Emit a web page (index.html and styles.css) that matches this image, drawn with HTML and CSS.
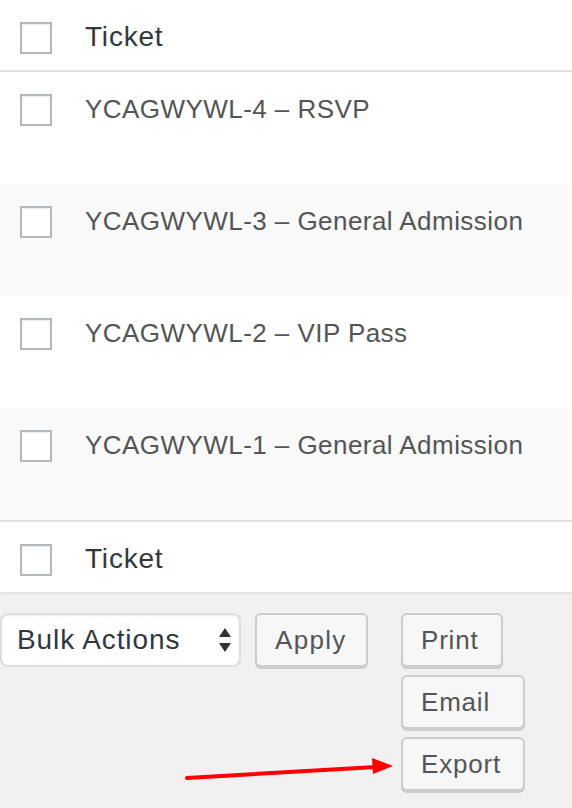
FILE: index.html
```html
<!DOCTYPE html>
<html>
<head>
<meta charset="utf-8">
<link rel="stylesheet" href="styles.css">
</head>
<body>
<div class="page">
  <div class="table">
    <div class="row head">
      <span class="cb"></span>
      <span class="label dark">Ticket</span>
    </div>
    <div class="row item">
      <span class="cb"></span>
      <span class="label">YCAGWYWL-4 – RSVP</span>
    </div>
    <div class="row item alt">
      <span class="cb"></span>
      <span class="label">YCAGWYWL-3 – General Admission</span>
    </div>
    <div class="row item">
      <span class="cb"></span>
      <span class="label">YCAGWYWL-2 – VIP Pass</span>
    </div>
    <div class="row item alt">
      <span class="cb"></span>
      <span class="label">YCAGWYWL-1 – General Admission</span>
    </div>
    <div class="row foot">
      <span class="cb"></span>
      <span class="label dark">Ticket</span>
    </div>
  </div>
  <div class="tablenav">
    <div class="select">
      <span>Bulk Actions</span>
      <svg class="updown" width="12" height="24" viewBox="0 0 12 24"><polygon points="6,0 12,9 0,9" fill="#333"/><polygon points="0,15 12,15 6,24" fill="#333"/></svg>
    </div>
    <button class="btn apply">Apply</button>
    <div class="actions">
      <button class="btn narrow">Print</button>
      <div class="stack">
        <button class="btn">Email</button>
        <button class="btn">Export</button>
      </div>
    </div>
  </div>
  <svg class="arrow" width="572" height="808" viewBox="0 0 572 808">
    <line x1="187" y1="778" x2="376" y2="767" stroke="#f00" stroke-width="4" stroke-linecap="round"/>
    <polygon points="372,758 393,766 373,774" fill="#f00"/>
  </svg>
</div>
</body>
</html>
```
FILE: styles.css
```css
html, body {
  margin: 0;
  padding: 0;
  background: #f1f1f1;
}
body {
  font-family: "Liberation Sans", Arial, sans-serif;
  font-size: 26px;
  color: #555;
}
.page {
  position: relative;
  width: 572px;
  height: 808px;
  overflow: hidden;
}
.table {
  background: #fff;
  box-shadow: 0 2px 2px rgba(0, 0, 0, 0.06);
}
.row {
  display: flex;
  align-items: flex-start;
  box-sizing: border-box;
}
.head {
  height: 72px;
  padding-top: 22px;
  border-bottom: 2px solid #e1e1e1;
}
.item {
  height: 112px;
  padding-top: 22px;
}
.alt {
  background: #f9f9f9;
}
.foot {
  height: 72px;
  padding-top: 22px;
  border-top: 2px solid #e1e1e1;
}
.cb {
  display: block;
  flex: none;
  width: 32px;
  height: 32px;
  box-sizing: border-box;
  margin-left: 20px;
  border: 2px solid #b4b9be;
  background: #fff;
  box-shadow: inset 0 1px 2px rgba(0, 0, 0, 0.1);
}
.label {
  margin-left: 33px;
  line-height: 32px;
  margin-top: -1px;
  letter-spacing: 0.45px;
}
.dark {
  color: #32373c;
  font-size: 28px;
  letter-spacing: 0.8px;
  margin-top: -1px;
}
.tablenav {
  display: flex;
  align-items: flex-start;
  padding-top: 21px;
}
.select {
  display: flex;
  align-items: center;
  justify-content: space-between;
  box-sizing: border-box;
  width: 241px;
  height: 54px;
  padding: 0 8px 0 15px;
  border: 2px solid #ddd;
  border-radius: 8px;
  background: #fff;
  color: #32373c;
  font-size: 28px;
  letter-spacing: 0.9px;
  box-shadow: inset 0 1px 2px rgba(0, 0, 0, 0.07);
}
.updown {
  display: block;
}
.btn {
  display: block;
  box-sizing: border-box;
  height: 54px;
  margin: 0;
  padding: 0 18px;
  font-family: inherit;
  font-size: 26px;
  letter-spacing: 0.8px;
  color: #555;
  background: #f7f7f7;
  border: 2px solid #ccc;
  border-radius: 6px;
  box-shadow: 0 2px 0 #ccc;
}
.apply {
  margin-left: 14px;
  width: 113px;
  padding: 0 0 0 18px;
  text-align: left;
  letter-spacing: 1.3px;
}
.actions {
  display: flex;
  flex-direction: column;
  align-items: flex-start;
  gap: 8px;
  margin-left: 33px;
}
.narrow {
  width: 102px;
  text-align: left;
}
.stack {
  display: flex;
  flex-direction: column;
  gap: 8px;
  width: 124px;
}
.stack .btn {
  width: 100%;
  text-align: left;
}
.arrow {
  position: absolute;
  left: 0;
  top: 0;
  pointer-events: none;
}
```
